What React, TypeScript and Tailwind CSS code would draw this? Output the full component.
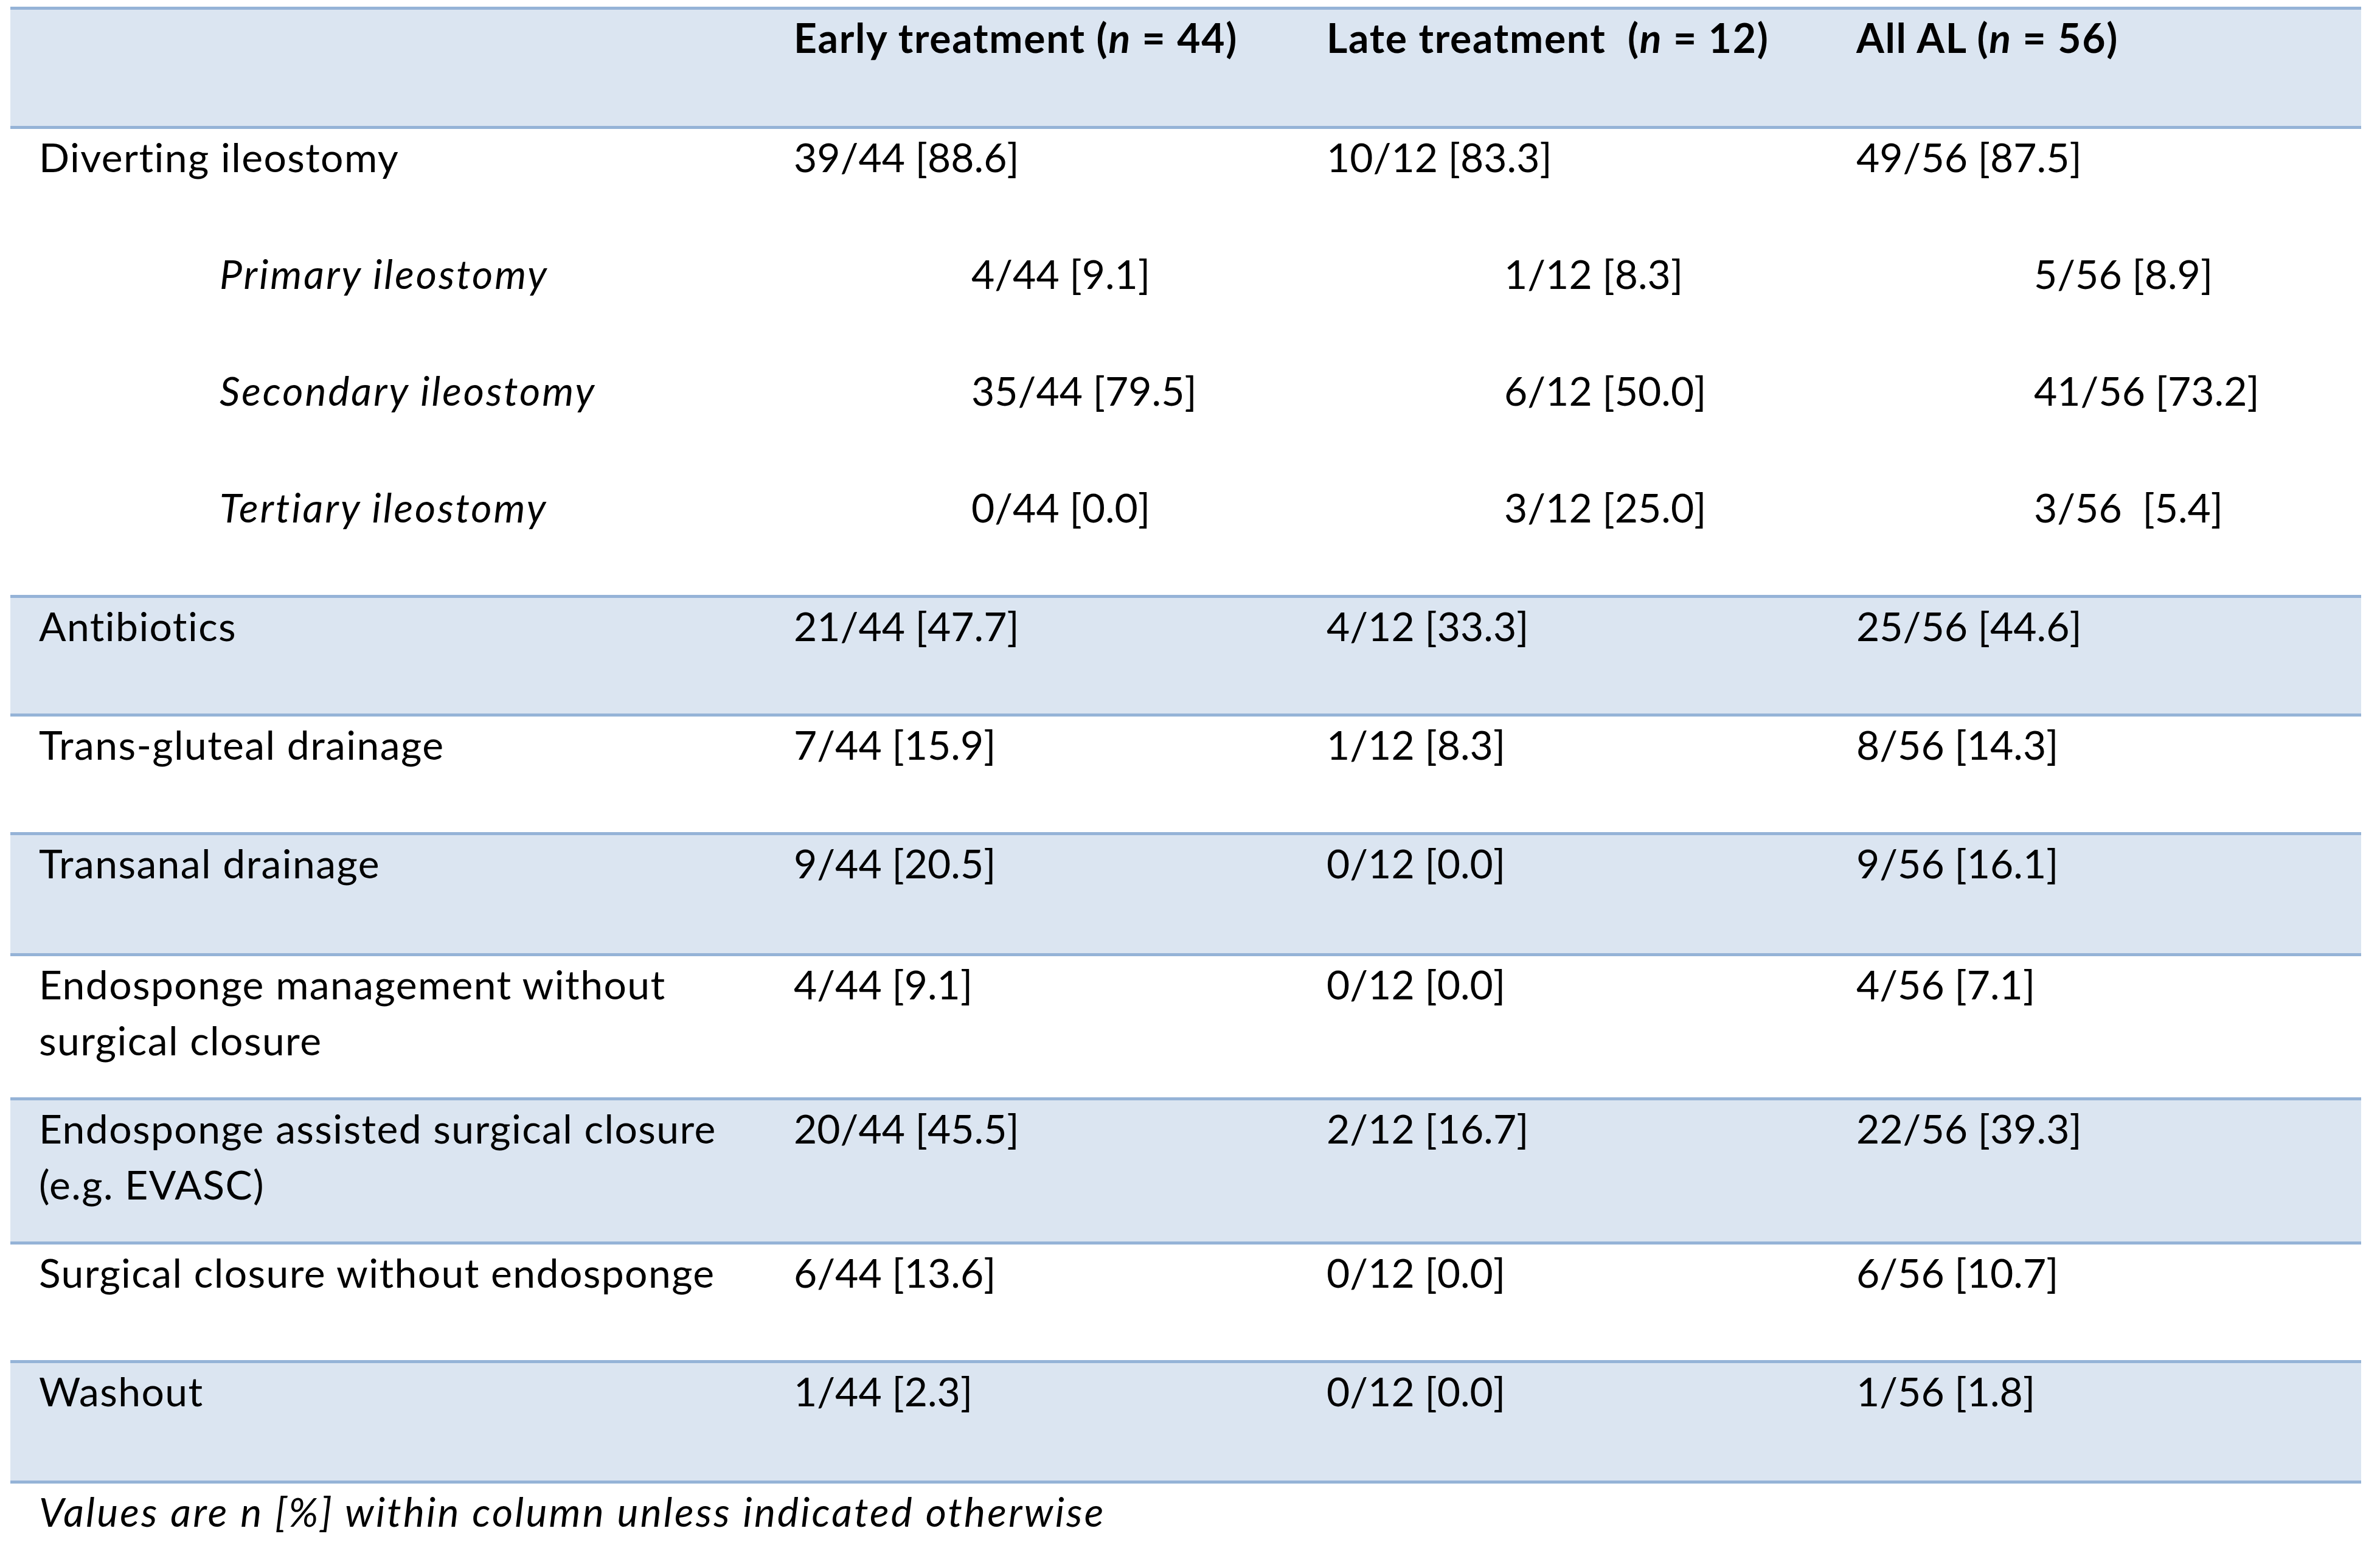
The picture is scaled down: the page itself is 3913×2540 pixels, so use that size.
type Row = {
  label: React.ReactNode;
  values: string[];
  shaded: boolean;
  height: string;
};

const ROWS: Row[] = [
  { label: "Antibiotics", values: ["21/44 [47.7]", "4/12 [33.3]", "25/56 [44.6]"], shaded: true, height: "h-[195px]" },
  { label: "Trans-gluteal drainage", values: ["7/44 [15.9]", "1/12 [8.3]", "8/56 [14.3]"], shaded: false, height: "h-[195px]" },
  { label: "Transanal drainage", values: ["9/44 [20.5]", "0/12 [0.0]", "9/56 [16.1]"], shaded: true, height: "h-[199px]" },
  {
    label: (
      <>
        Endosponge management without
        <br />
        surgical closure
      </>
    ),
    values: ["4/44 [9.1]", "0/12 [0.0]", "4/56 [7.1]"],
    shaded: false,
    height: "h-[237px]",
  },
  {
    label: (
      <>
        Endosponge assisted surgical closure
        <br />
        (e.g. EVASC)
      </>
    ),
    values: ["20/44 [45.5]", "2/12 [16.7]", "22/56 [39.3]"],
    shaded: true,
    height: "h-[237px]",
  },
  { label: "Surgical closure without endosponge", values: ["6/44 [13.6]", "0/12 [0.0]", "6/56 [10.7]"], shaded: false, height: "h-[195px]" },
  { label: "Washout", values: ["1/44 [2.3]", "0/12 [0.0]", "1/56 [1.8]"], shaded: true, height: "h-[198px]" },
];

const SUB_ROWS = [
  { label: "Primary ileostomy", values: ["4/44 [9.1]", "1/12 [8.3]", "5/56 [8.9]"] },
  { label: "Secondary ileostomy", values: ["35/44 [79.5]", "6/12 [50.0]", "41/56 [73.2]"] },
  { label: "Tertiary ileostomy", values: ["0/44 [0.0]", "3/12 [25.0]", "3/56  [5.4]"] },
];

const GRID = "grid grid-cols-[1241px_876px_871px_1fr]";
const CELL = "pl-[47px] whitespace-pre";
const LABEL = "pl-[47px] whitespace-pre tracking-[1.4px]";

export default function App(): React.JSX.Element {
  return (
    <div className="h-[2540px] w-[3913px] bg-white pl-[17px] pt-[11px] font-['Lato',sans-serif] text-[66px] leading-[92px] text-black">
      <div className="w-[3865px] border-b-[5px] border-[#95b3d7]">
        <div className={`${GRID} h-[196px] border-t-[5px] border-[#95b3d7] bg-[#dbe5f1] font-bold tracking-[1.7px]`}>
          <div className={CELL} />
          <div className={CELL}>
            Early treatment (<i>n</i> = 44)
          </div>
          <div className={CELL}>
            Late treatment  (<i>n</i> = 12)
          </div>
          <div className={CELL}>
            All AL (<i>n</i> = 56)
          </div>
        </div>

        <div className="h-[771px] border-t-[5px] border-[#95b3d7] bg-white">
          <div className={GRID}>
            <div className={LABEL}>Diverting ileostomy</div>
            <div className={CELL}>39/44 [88.6]</div>
            <div className={CELL}>10/12 [83.3]</div>
            <div className={CELL}>49/56 [87.5]</div>
          </div>
          {SUB_ROWS.map((row) => (
            <div key={row.label} className={`${GRID} mt-[100px]`}>
              <div className={CELL}>
                <span className="ml-[297px] italic tracking-[3px]">{row.label}</span>
              </div>
              {row.values.map((v) => (
                <div key={v} className={CELL}>
                  <span className="ml-[292px]">{v}</span>
                </div>
              ))}
            </div>
          ))}
        </div>

        {ROWS.map((row, i) => (
          <div
            key={i}
            className={`${GRID} ${row.height} border-t-[5px] border-[#95b3d7] ${row.shaded ? "bg-[#dbe5f1]" : "bg-white"}`}
          >
            <div className={LABEL}>{row.label}</div>
            {row.values.map((v) => (
              <div key={v} className={CELL}>
                {v}
              </div>
            ))}
          </div>
        ))}
      </div>
      <p className="pl-[47px] italic tracking-[3.2px]">Values are n [%] within column unless indicated otherwise</p>
    </div>
  );
}
